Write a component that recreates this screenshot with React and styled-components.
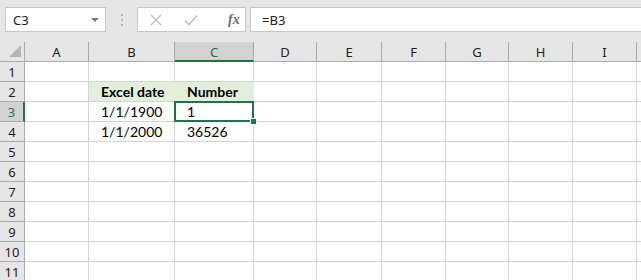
import React from "react"
import styled, { createGlobalStyle } from "styled-components"

const GlobalStyle = createGlobalStyle`
  html, body {
    margin: 0;
    padding: 0;
    background: #e6e6e6;
    overflow: hidden;
  }
`

const Window = styled.div`
  width: 641px;
  height: 280px;
  background: #e6e6e6;
  overflow: hidden;
  font-family: "Noto Sans", "Open Sans", sans-serif;
`

const Toolbar = styled.div`
  display: flex;
  align-items: flex-start;
  height: 42px;
  box-sizing: border-box;
  padding: 7px 0 0 5px;
`

const NameBox = styled.div`
  width: 101px;
  height: 25px;
  box-sizing: border-box;
  border: 1px solid #c6c6c6;
  background: #fff;
  display: flex;
  align-items: center;
  justify-content: space-between;
  padding: 0 6px 0 7px;
  font-size: 13px;
  color: #222;
`

const DropArrow = styled.span`
  width: 0;
  height: 0;
  border-left: 4px solid transparent;
  border-right: 4px solid transparent;
  border-top: 4px solid #7a7a7a;
`

const Grip = styled.div`
  width: 31px;
  height: 25px;
  display: flex;
  flex-direction: column;
  align-items: center;
  justify-content: center;
  gap: 3px;

  span {
    width: 2px;
    height: 2px;
    background: #b3b3b3;
  }
`

const FormulaButtons = styled.div`
  width: 109px;
  height: 25px;
  box-sizing: border-box;
  border: 1px solid #c6c6c6;
  background: #fff;
  display: flex;
  align-items: center;
  padding-left: 12px;
  gap: 22px;
`

const Fx = styled.span`
  font-family: "Liberation Serif", "DejaVu Serif", serif;
  font-style: italic;
  font-weight: bold;
  font-size: 14px;
  color: #707070;
  margin-left: 8px;
`

const FormulaInput = styled.div`
  flex: 1;
  height: 25px;
  box-sizing: border-box;
  margin-left: 4px;
  border: 1px solid #c6c6c6;
  border-right: none;
  background: #fff;
  display: flex;
  align-items: center;
  padding-left: 11px;
  font-size: 13px;
  color: #222;
`

const Sheet = styled.div`
  display: grid;
  grid-template-columns: ${p => p.$cols.map(c => c + "px").join(" ")} 1fr;
  grid-auto-rows: 20px;
`

const Corner = styled.div`
  box-sizing: border-box;
  border-right: 1px solid #ababab;
  border-bottom: 1px solid #ababab;
  position: relative;

  &::after {
    content: "";
    position: absolute;
    right: 3px;
    bottom: 4px;
    width: 0;
    height: 0;
    border-left: 12px solid transparent;
    border-bottom: 12px solid #b6b6b6;
  }
`

const ColHeader = styled.div`
  box-sizing: border-box;
  background: ${p => (p.$active ? "#d2d2d2" : "#e6e6e6")};
  border-right: 1px solid #ababab;
  border-bottom: ${p => (p.$active ? "2px solid #217346" : "1px solid #ababab")};
  display: flex;
  align-items: center;
  justify-content: center;
  font-size: 13px;
  color: ${p => (p.$active ? "#217346" : "#222")};
  padding-top: ${p => (p.$active ? "1px" : "0")};
`

const RowHeader = styled.div`
  box-sizing: border-box;
  background: ${p => (p.$active ? "#d2d2d2" : "#e6e6e6")};
  border-right: ${p => (p.$active ? "2px solid #217346" : "1px solid #ababab")};
  border-bottom: 1px solid #ababab;
  display: flex;
  align-items: center;
  justify-content: center;
  font-size: 13px;
  color: ${p => (p.$active ? "#217346" : "#222")};
  padding-top: 1px;
`

const Cell = styled.div`
  position: relative;
  box-sizing: border-box;
  background: ${p => (p.$fill ? "#e2efda" : "#fff")};
  border-right: 1px solid ${p => (p.$fill ? "#e2efda" : "#d4d4d4")};
  border-bottom: 1px solid #d4d4d4;
  display: flex;
  align-items: flex-end;
  padding: 0 0 1px 12px;
  font-family: "Lato", "Carlito", sans-serif;
  font-size: 14px;
  font-weight: ${p => (p.$bold ? 700 : 400)};
  color: #000;
  white-space: nowrap;

  ${p =>
    p.$selected &&
    `
    z-index: 2;
    &::after {
      content: "";
      position: absolute;
      top: -1px;
      left: -1px;
      right: -1px;
      bottom: -1px;
      border: 2px solid #217346;
    }
  `}
`

const Handle = styled.span`
  position: absolute;
  right: -4px;
  bottom: -4px;
  width: 5px;
  height: 5px;
  background: #217346;
  border: 1px solid #fff;
  z-index: 3;
`

const columns = ["A", "B", "C", "D", "E", "F", "G", "H", "I"]
const widths = [25, 64, 86, 79, 63, 65, 64, 63, 64, 64]

const data = {
  "B2": { text: "Excel date", bold: true, fill: true },
  "C2": { text: "Number", bold: true, fill: true },
  "B3": { text: "1/1/1900" },
  "C3": { text: "1" },
  "B4": { text: "1/1/2000" },
  "C4": { text: "36526" },
}

const CrossIcon = () => (
  <svg width="12" height="12" viewBox="0 0 12 12">
    <path d="M1 1 L11 11 M11 1 L1 11" stroke="#c0c0c0" strokeWidth="1.4" fill="none" />
  </svg>
)

const CheckIcon = () => (
  <svg width="14" height="12" viewBox="0 0 14 12">
    <path d="M1 6.5 L5 10.5 L13 1.5" stroke="#c0c0c0" strokeWidth="1.6" fill="none" />
  </svg>
)

export default function App() {
  const rows = Array.from({ length: 11 }, (_, i) => i + 1)
  return (
    <Window>
      <GlobalStyle />
      <Toolbar>
        <NameBox>
          C3
          <DropArrow />
        </NameBox>
        <Grip>
          <span />
          <span />
          <span />
        </Grip>
        <FormulaButtons>
          <CrossIcon />
          <CheckIcon />
          <Fx>fx</Fx>
        </FormulaButtons>
        <FormulaInput>=B3</FormulaInput>
      </Toolbar>
      <Sheet $cols={widths}>
        <Corner />
        {columns.map(c => (
          <ColHeader key={c} $active={c === "C"}>
            {c}
          </ColHeader>
        ))}
        <ColHeader />
        {rows.map(r => (
          <React.Fragment key={r}>
            <RowHeader $active={r === 3}>{r}</RowHeader>
            {columns.map(c => {
              const ref = c + r
              const cell = data[ref] || {}
              const selected = ref === "C3"
              return (
                <Cell key={ref} $bold={cell.bold} $fill={cell.fill} $selected={selected}>
                  {cell.text}
                  {selected && <Handle />}
                </Cell>
              )
            })}
            <Cell />
          </React.Fragment>
        ))}
      </Sheet>
    </Window>
  )
}
